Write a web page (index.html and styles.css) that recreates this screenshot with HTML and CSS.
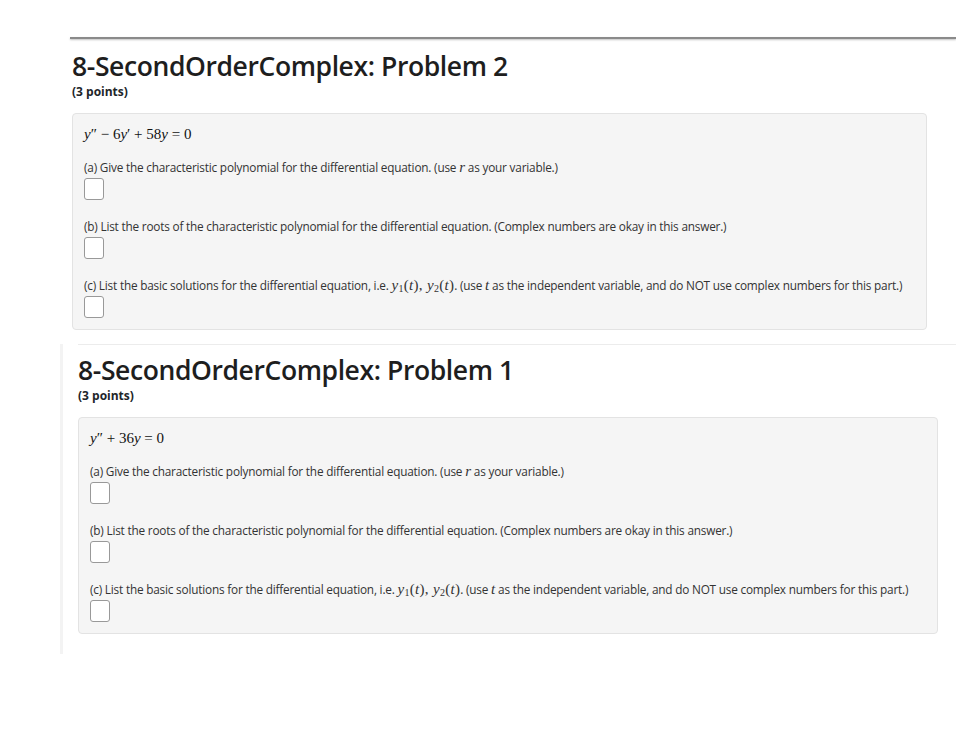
FILE: index.html
```html
<!DOCTYPE html>
<html>
<head>
<meta charset="utf-8">
<link rel="stylesheet" href="styles.css">
</head>
<body>
<div class="page">
  <section class="problem first">
    <div class="rule"></div>
    <h2 class="title">8-SecondOrderComplex: Problem 2</h2>
    <div class="points">(3 points)</div>
    <div class="well">
      <p class="eq"><i>y</i>″ − 6<i>y</i>′ + 58<i>y</i> = 0</p>
      <p class="q">(a) Give the characteristic polynomial for the differential equation. (use <i class="m">r</i> as your variable.)</p>
      <div class="ans"></div>
      <p class="q">(b) List the roots of the characteristic polynomial for the differential equation. (Complex numbers are okay in this answer.)</p>
      <div class="ans"></div>
      <p class="q">(c) List the basic solutions for the differential equation, i.e. <span class="mm"><i>y</i><sub>1</sub>(<i>t</i>), <i>y</i><sub>2</sub>(<i>t</i>)</span>. (use <i class="m">t</i> as the independent variable, and do NOT use complex numbers for this part.)</p>
      <div class="ans"></div>
    </div>
  </section>
  <section class="problem second">
    <h2 class="title">8-SecondOrderComplex: Problem 1</h2>
    <div class="points">(3 points)</div>
    <div class="well">
      <p class="eq"><i>y</i>″ + 36<i>y</i> = 0</p>
      <p class="q">(a) Give the characteristic polynomial for the differential equation. (use <i class="m">r</i> as your variable.)</p>
      <div class="ans"></div>
      <p class="q">(b) List the roots of the characteristic polynomial for the differential equation. (Complex numbers are okay in this answer.)</p>
      <div class="ans"></div>
      <p class="q">(c) List the basic solutions for the differential equation, i.e. <span class="mm"><i>y</i><sub>1</sub>(<i>t</i>), <i>y</i><sub>2</sub>(<i>t</i>)</span>. (use <i class="m">t</i> as the independent variable, and do NOT use complex numbers for this part.)</p>
      <div class="ans"></div>
    </div>
  </section>
</div>
</body>
</html>
```
FILE: styles.css
```css
html, body {
  margin: 0;
  padding: 0;
  background: #fff;
}
.page {
  height: 654px;
  overflow: hidden;
  font-family: "Open Sans", "Noto Sans", sans-serif;
  color: #212529;
}
.problem.first {
  padding-top: 37px;
  padding-left: 72px;
  padding-right: 29px;
}
.rule {
  height: 2px;
  margin-left: -2px;
  margin-right: -29px;
  background: #8a8a8a;
  box-shadow: 0 1px 2px rgba(0,0,0,0.25);
}
.title {
  margin: 11px 0 0 0;
  font-size: 26.5px;
  font-weight: 600;
  line-height: 32px;
  color: #1e1e1e;
  letter-spacing: -0.4px;
}
.points {
  font-size: 12px;
  font-weight: 700;
  line-height: 15px;
  margin-top: 2px;
}
.well {
  margin-top: 14px;
  background: #f5f5f5;
  border: 1px solid #e3e3e3;
  border-radius: 4px;
  padding: 10px 11px 11px 11px;
}
.eq {
  margin: 0 0 15px 0;
  font-family: "Liberation Serif", "DejaVu Serif", serif;
  font-size: 15px;
  line-height: 20px;
  color: #111;
}
.eq i, .mm i, i.m {
  font-family: "Liberation Serif", "DejaVu Serif", serif;
  font-style: italic;
}
.mm {
  font-family: "Liberation Serif", "DejaVu Serif", serif;
  font-size: 15px;
  letter-spacing: 0.3px;
  line-height: 1;
}
.mm sub {
  font-size: 10px;
  line-height: 0;
  vertical-align: -2px;
}
i.m {
  font-size: 15px;
  letter-spacing: 0;
  line-height: 1;
}
.q {
  margin: 0;
  font-size: 11.8px;
  letter-spacing: -0.2px;
  line-height: 16px;
  height: 16px;
  color: #333;
}
.ans {
  width: 18px;
  height: 20px;
  border: 1px solid #999;
  border-radius: 3px;
  background: #fff;
  margin-top: 3px;
  margin-bottom: 18px;
}
.well .ans:last-child {
  margin-bottom: 0;
}
.problem.second {
  margin-top: 14px;
  margin-left: 60px;
  border-left: 3px solid #f3f3f3;
  padding-left: 15px;
  padding-right: 15px;
  padding-bottom: 40px;
}
.problem.second::before {
  content: "";
  display: block;
  height: 1px;
  background: #ececec;
  margin-right: -15px;
}
.problem.second .title {
  margin-top: 9px;
}
.problem.second .well {
  margin-right: 3px;
}
```
